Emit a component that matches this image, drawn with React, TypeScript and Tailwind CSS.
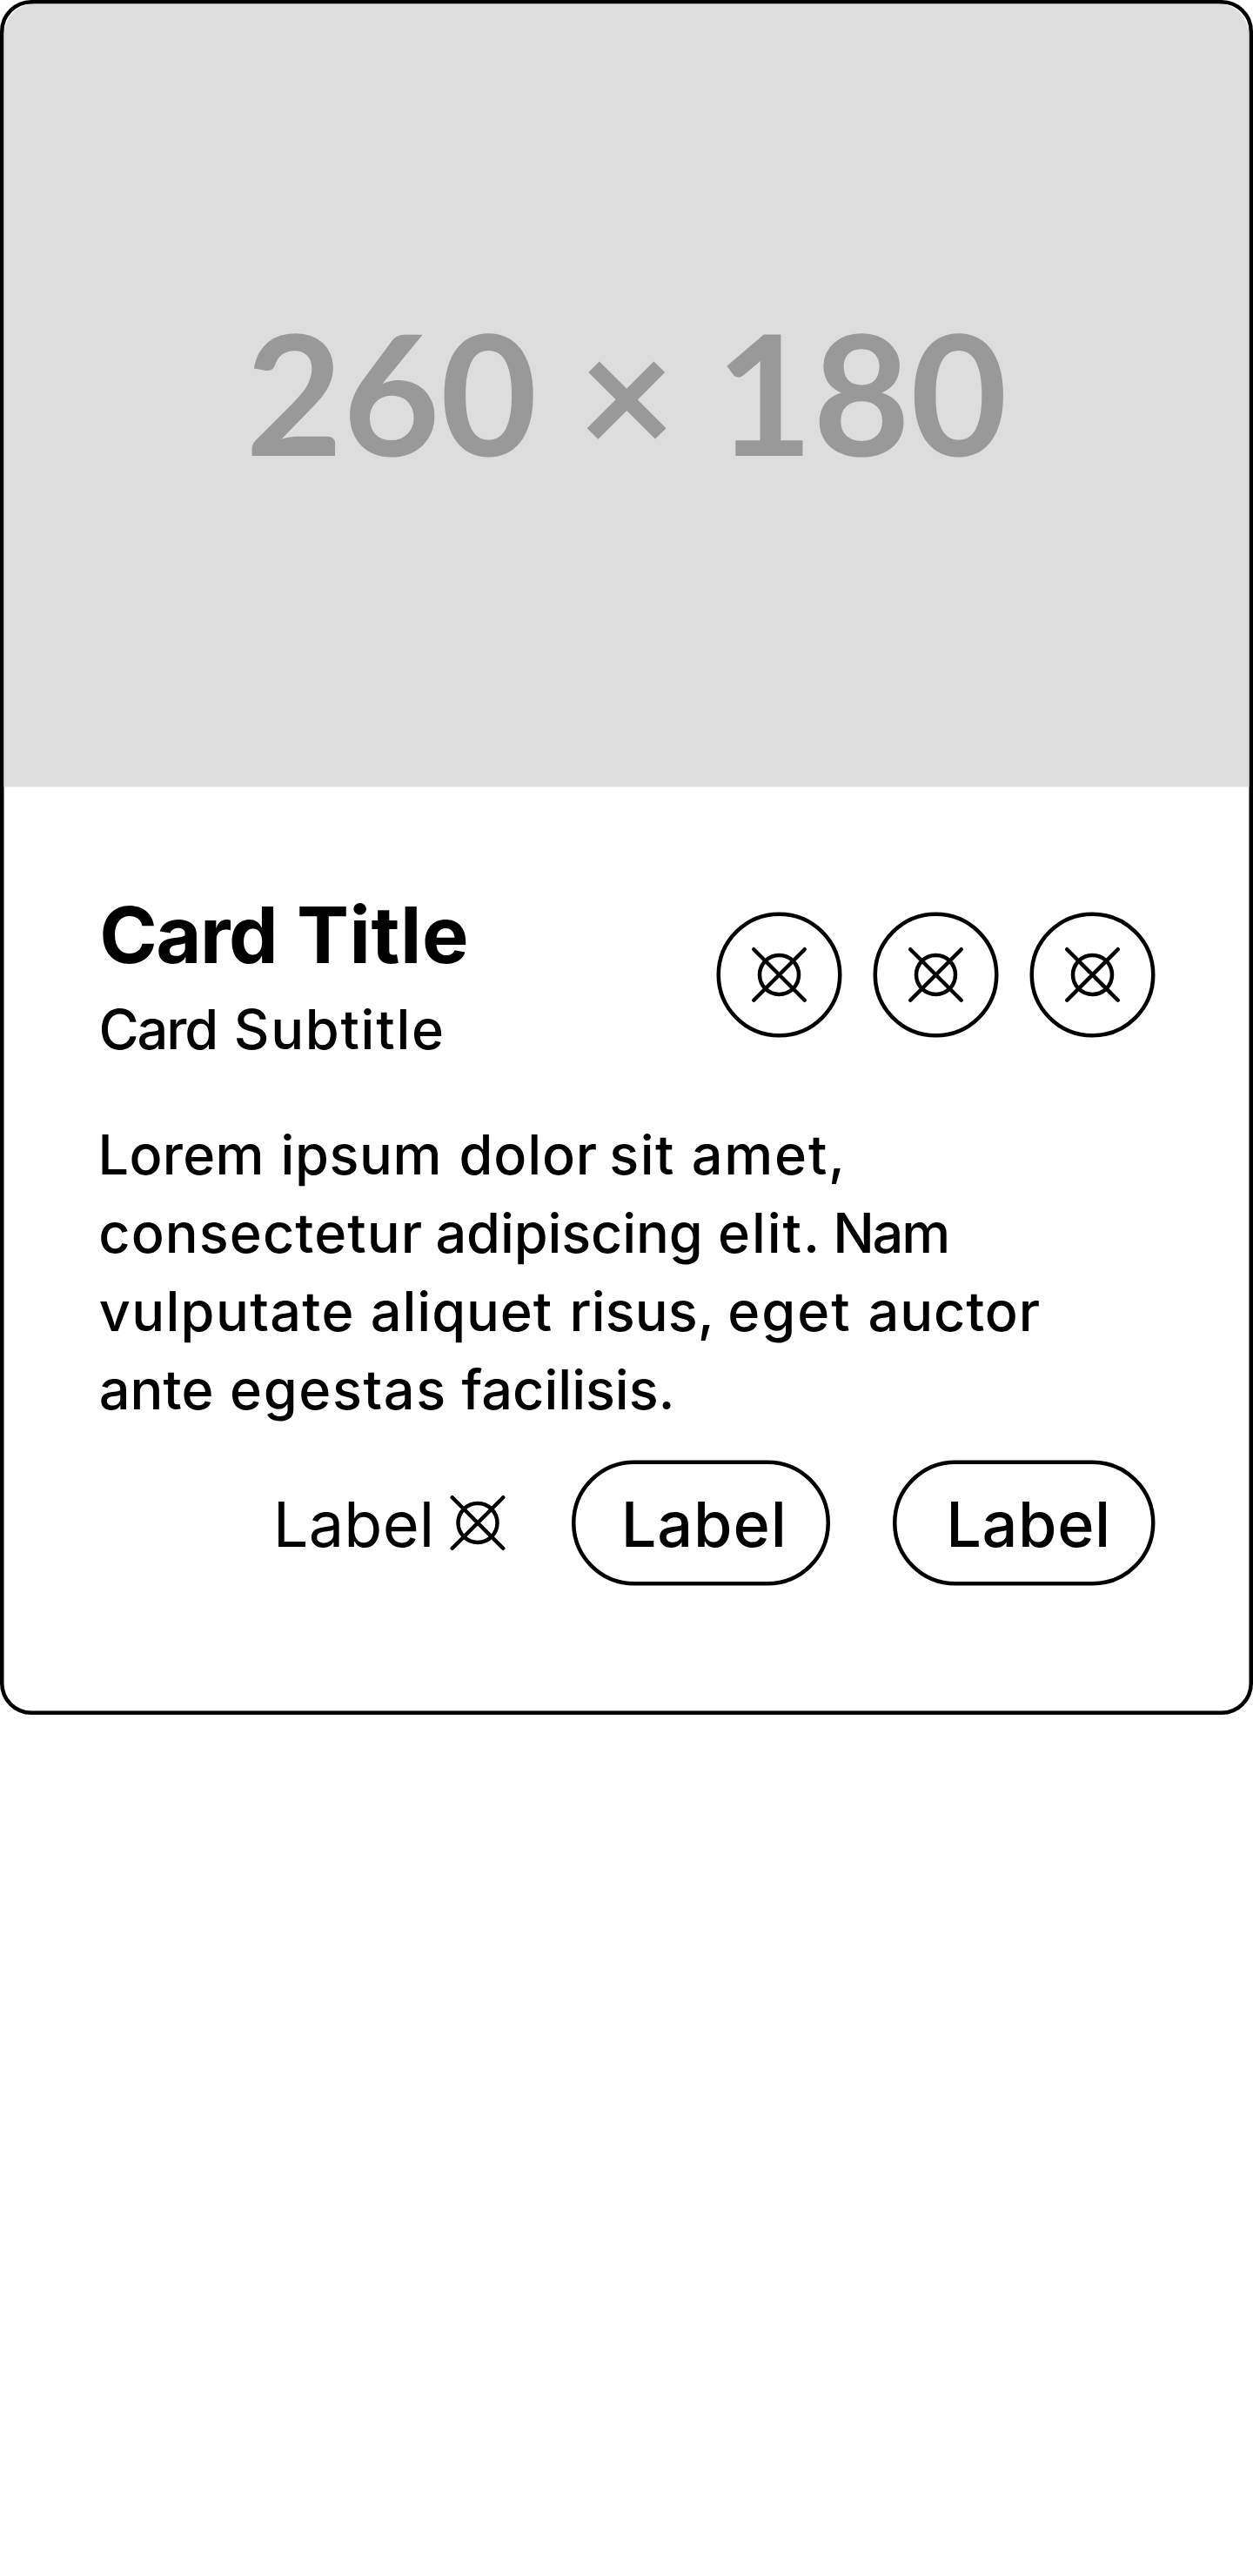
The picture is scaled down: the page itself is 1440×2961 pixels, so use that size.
type Word = { text: string; tracking: string };

const TITLE: Word[] = [
  { text: 'Card', tracking: 'ml-[0.4px] tracking-[-0.336px]' },
  { text: 'Title', tracking: 'ml-[0.33px] tracking-[0.1px]' },
];

const SUBTITLE: Word[] = [
  { text: 'Card', tracking: 'ml-[0.23px] tracking-[-0.47px]' },
  { text: 'Subtitle', tracking: 'ml-[0.64px] tracking-[0.382px]' },
];

const BODY: Word[][] = [
  [
    { text: 'Lorem', tracking: 'tracking-[0.059px]' },
    { text: 'ipsum', tracking: 'ml-[0.48px] tracking-[0.122px]' },
    { text: 'dolor', tracking: 'ml-[0.61px] tracking-[0.188px]' },
    { text: 'sit', tracking: 'ml-[-0.8px] tracking-[0.327px]' },
    { text: 'amet,', tracking: 'ml-[0.45px] tracking-[0.396px]' },
  ],
  [
    { text: 'consectetur', tracking: 'ml-[0.18px] tracking-[0.24px]' },
    { text: 'adipiscing', tracking: 'ml-[-0.6px] tracking-[-0.031px]' },
    { text: 'elit.', tracking: 'ml-[0.15px] tracking-[0.428px]' },
    { text: 'Nam', tracking: 'ml-[-0.81px] tracking-[-0.503px]' },
  ],
  [
    { text: 'vulputate', tracking: 'ml-[0.26px] tracking-[0.297px]' },
    { text: 'aliquet', tracking: 'ml-[0.25px] tracking-[0.208px]' },
    { text: 'risus,', tracking: 'ml-[0.58px] tracking-[0.02px]' },
    { text: 'eget', tracking: 'ml-[-0.38px] tracking-[0.444px]' },
    { text: 'auctor', tracking: 'ml-[0.46px] tracking-[0.188px]' },
  ],
  [
    { text: 'ante', tracking: 'ml-[0.28px] tracking-[0.019px]' },
    { text: 'egestas', tracking: 'ml-[0.36px] tracking-[0.359px]' },
    { text: 'facilisis.', tracking: 'tracking-[-0.007px]' },
  ],
];

function Line({ words }: { words: Word[] }) {
  return (
    <span className="block whitespace-nowrap">
      {words.map(({ text, tracking }, i) => (
        <span key={text}>
          {i > 0 && ' '}
          <span className={tracking}>{text}</span>
        </span>
      ))}
    </span>
  );
}

function CrossIcon() {
  return (
    <svg
      className="block size-4 shrink-0"
      viewBox="0 0 16 16"
      fill="none"
      stroke="currentColor"
      strokeLinecap="round"
    >
      <circle cx="8" cy="8" r="5" />
      <path d="m1.5 1.5 13 13M14.5 1.5l-13 13" />
    </svg>
  );
}

function IconButton() {
  return (
    <button className="flex size-8 items-center justify-center rounded-full border border-black">
      <CrossIcon />
    </button>
  );
}

export default function App() {
  return (
    <main className="h-[2961px] w-[1440px] overflow-hidden bg-white font-['Inter',sans-serif] text-black">
      <article className="flex h-[438px] w-80 origin-top-left scale-[4.5] flex-col rounded-lg border border-black">
        <div className="flex h-[200px] shrink-0 items-center justify-center rounded-t-lg bg-[#dddddd] pt-[2px] font-['Lato',sans-serif] text-[42.8px] leading-none font-bold text-[#999999] [text-rendering:geometricPrecision]">
          <span className="-translate-y-[0.64px]">260 × 180</span>
        </div>
        <div className="flex flex-col px-6 pt-6">
          <header className="flex items-center justify-between">
            <div>
              <h1 className="text-xl leading-7 font-bold">
                <Line words={TITLE} />
              </h1>
              <p className="text-sm leading-5 font-medium">
                <Line words={SUBTITLE} />
              </p>
            </div>
            <div className="flex gap-2">
              <IconButton />
              <IconButton />
              <IconButton />
            </div>
          </header>
          <p className="mt-3 text-sm leading-5 font-medium">
            {BODY.map((words) => (
              <Line key={words[0].text} words={words} />
            ))}
          </p>
          <footer className="mt-2 flex justify-end gap-4 text-base">
            <button className="flex h-8 items-center gap-[3px] tracking-[0.05px]">
              Label
              <CrossIcon />
            </button>
            <button className="h-8 w-[66px] rounded-full border border-black pl-[11.6px] text-left font-medium tracking-[0.2px] whitespace-nowrap">
              Label
            </button>
            <button className="h-8 w-[67px] rounded-full border border-black pl-[12.6px] text-left font-medium tracking-[0.14px] whitespace-nowrap">
              Label
            </button>
          </footer>
        </div>
      </article>
    </main>
  );
}
